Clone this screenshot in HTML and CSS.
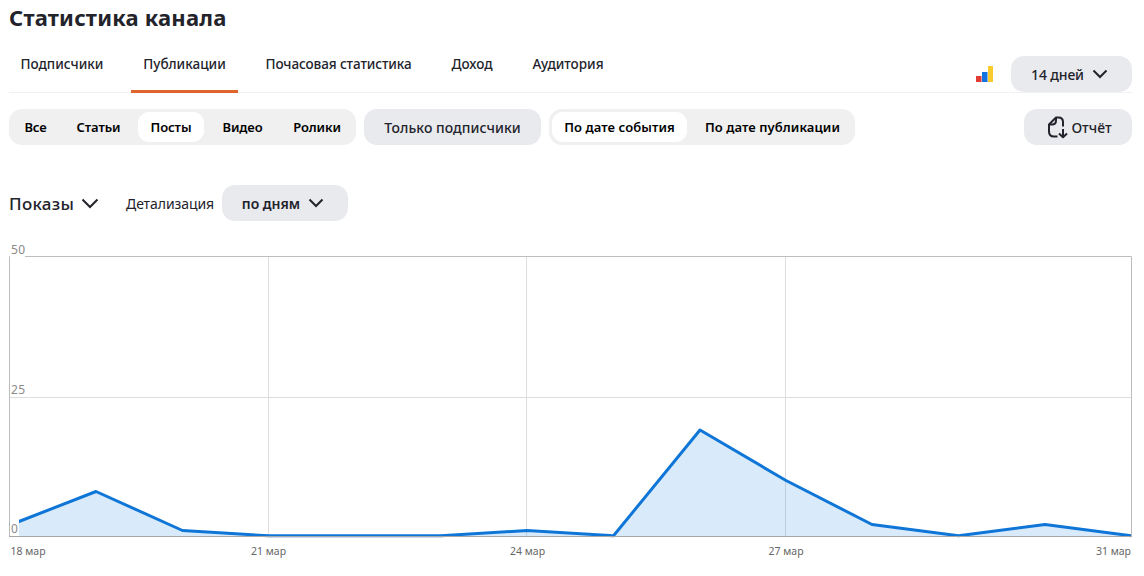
FILE: index.html
```html
<!DOCTYPE html>
<html lang="ru">

<head>
    <meta charset="UTF-8">
    <meta name="viewport" content="width=device-width, initial-scale=1.0">
    <title>Статистика канала</title>
    <link rel="stylesheet" href="styles.css">
</head>

<body>

    <h1 class="title">Статистика канала</h1>

    <!-- Вкладки -->
    <header class="header">
        <nav class="tabs">
            <a class="tab">Подписчики</a>
            <a class="tab tab-active">Публикации</a>
            <a class="tab tab-wide">Почасовая статистика</a>
            <a class="tab tab-income">Доход</a>
            <a class="tab tab-audience">Аудитория</a>
        </nav>
        <div class="period">
            <svg class="metrika" width="18" height="17" viewBox="0 0 18 17">
                <rect x="0" y="10" width="5.5" height="6" fill="#e03c35" />
                <rect x="6" y="6" width="5.5" height="10" fill="#1272e0" />
                <rect x="12" y="0" width="5" height="16" fill="#f9cb2c" />
            </svg>
            <button class="btn btn-period">
                <span>14 дней</span>
                <svg class="arrow" width="16" height="10" viewBox="0 0 16 10"><path d="M1.5 1.5 L8 8 L14.5 1.5" /></svg>
            </button>
        </div>
    </header>

    <!-- Фильтры -->
    <div class="filters">
        <div class="segment">
            <span class="item item-all">Все</span>
            <span class="item item-articles">Статьи</span>
            <span class="item item-posts item-active">Посты</span>
            <span class="item item-video">Видео</span>
            <span class="item item-clips">Ролики</span>
        </div>
        <button class="btn btn-subs">Только подписчики</button>
        <div class="segment">
            <span class="item item-date item-event item-active">По дате события</span>
            <span class="item item-date item-public">По дате публикации</span>
        </div>
        <button class="btn btn-report">
            <svg class="report-icon" width="22" height="24" viewBox="0 0 22 24">
                <path d="M11.5 21.500 H8 Q3 21.500 3 16.500 V9.500 L10 2.500 H12.500 Q17 2.500 17 7 V11.500" />
                <path d="M3.500 9.500 H6 Q10 9.500 10 5.500 V3" />
                <path d="M17 14 V22 M13 18.500 L17 22.300 L21 18.500" />
            </svg>
            <span>Отчёт</span>
        </button>
    </div>

    <!-- Настройки графика -->
    <div class="options">
        <span class="metric">Показы</span>
        <svg class="arrow arrow-metric" width="18" height="11" viewBox="0 0 18 11"><path d="M1.500 1.500 L9 9 L16.500 1.500" /></svg>
        <span class="detail">Детализация</span>
        <button class="btn btn-days">
            <span>по дням</span>
            <svg class="arrow" width="16" height="10" viewBox="0 0 16 10"><path d="M1.5 1.5 L8 8 L14.5 1.5" /></svg>
        </button>
    </div>

    <!-- График -->
    <svg class="chart" width="1144" height="330" viewBox="0 240 1144 330">
        <path class="grid" d="M9 397.500 H1132 M268.500 257 V536 M526.500 257 V536 M785.500 257 V536" />
        <path class="frame" d="M9.500 536.500 V256.500 H1131.500 V536.500" />
        <path class="area" d="M10 536 V525 L96 491.500 L182.500 530.500 L268.500 536 H441 L527 530.500 L613.500 536 L700 430 L786 480.500 L872 524.500 L958.500 536 L1045 524.500 L1131 536 Z" />
        <path class="line" d="M10 525 L96 491.500 L182.500 530.500 L268.500 535.800 H441 L527 530.500 L613.500 535.800 L700 430 L786 480.500 L872 524.500 L958.500 535.800 L1045 524.500 L1131 535.800" />
        <path class="axis" d="M9 536.500 H1132" />
        <g class="label-bg">
            <rect x="10" y="242" width="15" height="15" />
            <rect x="10" y="382" width="15" height="15" />
            <rect x="10" y="520" width="9" height="16" />
        </g>
        <g class="values">
            <text x="11" y="254" textLength="14">50</text>
            <text x="11" y="394" textLength="14">25</text>
            <text x="11" y="533" textLength="7">0</text>
        </g>
        <g class="dates">
            <text x="10.500" y="555">18 мар</text>
            <text x="251" y="555">21 мар</text>
            <text x="510" y="555">24 мар</text>
            <text x="768.500" y="555">27 мар</text>
            <text x="1131" y="555" text-anchor="end">31 мар</text>
        </g>
    </svg>

</body>

</html>
```
FILE: styles.css
```css
* {
    margin: 0;
    padding: 0;
    box-sizing: border-box;
}

body {
    height: 576px;
    overflow: hidden;
    background-color: #fff;
    color: #23232b;
    font-family: "Noto Sans", "Open Sans", sans-serif;
    font-size: 14px;
}

.title {
    height: 56px;
    padding: 2px 9px 0;
    font-size: 22px;
    line-height: 30px;
    font-weight: 700;
    letter-spacing: 0.2px;
}

/* Вкладки */
.header {
    display: flex;
    justify-content: space-between;
    height: 37px;
    margin: 0 12px 0 9px;
    border-bottom: 1px solid #f1f1f1;
}

.tabs {
    display: flex;
    gap: 16px;
}

.tab {
    display: flex;
    justify-content: center;
    width: 107px;
    height: 37px;
    line-height: 17px;
    font-weight: 500;
    font-size: 13.5px;
    white-space: nowrap;
}

.tab:first-child {
    width: 106px;
}

.tab-active {
    border-bottom: 3px solid #e0652c;
}

.tab-wide {
    width: 169px;
    letter-spacing: -0.1px;
}

.tab-income {
    width: 66px;
}

.tab-audience {
    width: 94px;
}

.period {
    display: flex;
    align-items: center;
    gap: 17px;
}

/* Кнопки */
.btn {
    display: flex;
    align-items: center;
    justify-content: center;
    height: 36px;
    border: none;
    border-radius: 13px;
    background-color: #e9eaee;
    color: #23232b;
    font-family: inherit;
    font-size: 14px;
    font-weight: 500;
    white-space: nowrap;
}

.btn-period {
    width: 121px;
    padding-right: 4px;
    gap: 8px;
    letter-spacing: -0.15px;
}

.btn-subs {
    width: 177px;
    letter-spacing: 0.05px;
}

.btn-report {
    width: 108px;
    margin-left: auto;
    padding-left: 2px;
    gap: 3px;
}

.btn-days {
    width: 126px;
    padding-right: 4px;
    gap: 8px;
    margin-left: 8px;
    font-weight: 600;
}

.arrow,
.report-icon {
    flex-shrink: 0;
    fill: none;
    stroke: #23232b;
    stroke-width: 2;
}

.report-icon {
    stroke-linejoin: round;
}

/* Фильтры */
.filters {
    display: flex;
    gap: 8px;
    margin: 16px 12px 0 9px;
}

.segment {
    display: flex;
    gap: 6px;
    height: 36px;
    padding: 3px;
    border-radius: 13px;
    background-color: #f0f0f0;
}

.item {
    display: flex;
    align-items: center;
    justify-content: center;
    border-radius: 11px;
    color: #000;
    font-size: 13px;
    font-weight: 600;
    letter-spacing: -0.1px;
    white-space: nowrap;
}

.item-date {
    letter-spacing: 0.08px;
}

.item-active {
    background-color: #fff;
}

.item-all {
    width: 47px;
}

.item-articles {
    width: 67px;
}

.item-posts {
    width: 66px;
}

.item-video {
    width: 65px;
}

.item-clips {
    width: 72px;
}

.item-event {
    width: 135px;
}

.item-public {
    width: 159px;
}

/* Настройки графика */
.options {
    display: flex;
    align-items: center;
    height: 36px;
    margin: 40px 0 0 9px;
}

.metric {
    width: 65px;
    font-size: 17px;
    font-weight: 500;
    letter-spacing: 0.3px;
}

.arrow-metric {
    margin-left: 7px;
}

.detail {
    width: 88px;
    margin-left: 27px;
    letter-spacing: -0.08px;
    white-space: nowrap;
}

/* График */
.chart {
    display: block;
    margin-top: 19px;
}

.grid {
    fill: none;
    stroke: #dedede;
}

.frame {
    fill: none;
    stroke: #bdbdbd;
}

.area {
    fill: #0077dd;
    fill-opacity: 0.15;
}

.line {
    fill: none;
    stroke: #0f76d8;
    stroke-width: 3;
    stroke-linejoin: round;
}

.axis {
    stroke: #a6a6a6;
}

.label-bg {
    fill: #fff;
}

.values {
    fill: #8a8a8a;
    font-size: 12px;
}

.dates {
    fill: #666;
    font-size: 10.5px;
}
```
